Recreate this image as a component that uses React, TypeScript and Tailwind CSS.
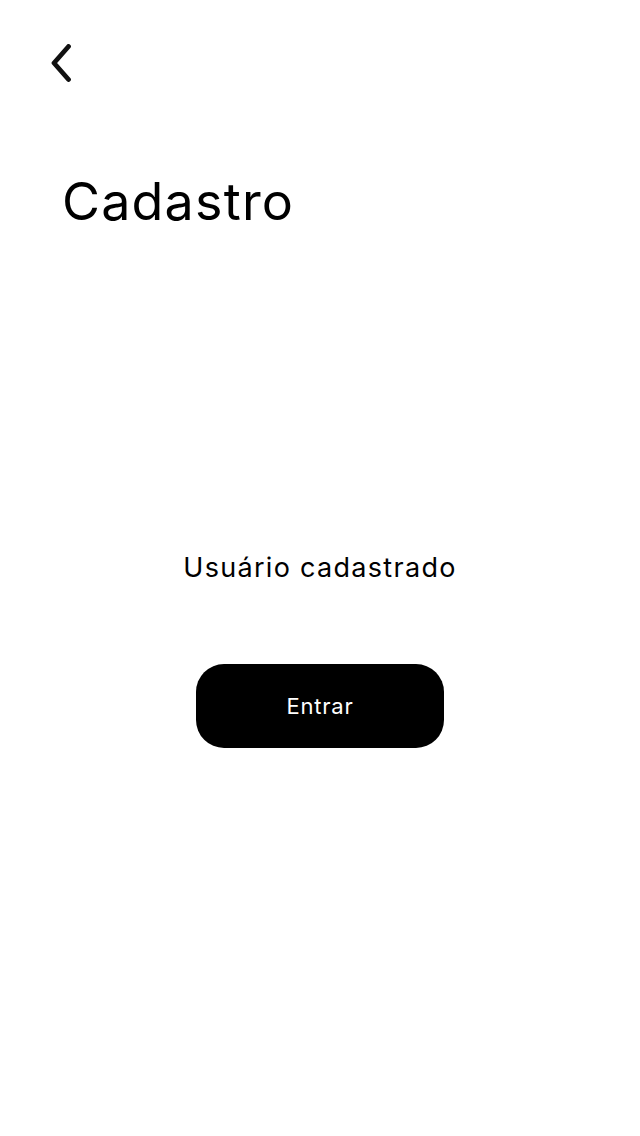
import React from "react";

export default function App() {
  return (
    <div className="w-[640px] h-[1136px] bg-white flex flex-col text-black" style={{ fontFamily: "Inter, 'Noto Sans', sans-serif" }}>
      <div className="pt-[44px] pl-[50px]">
        <svg width="22" height="38" viewBox="0 0 22 38" fill="none">
          <path d="M18.5 2.5 L4 19 L18.5 35.5" stroke="#111" strokeWidth="4.8" strokeLinecap="round" strokeLinejoin="round" />
        </svg>
      </div>
      <h1 className="mt-[90px] ml-[62px] text-[52px] leading-[60px] font-normal tracking-[1.2px]">Cadastro</h1>
      <div className="mt-[320px] flex flex-col items-center">
        <p className="text-[27px] leading-[32px] tracking-[1.3px]">Usuário cadastrado</p>
        <button className="mt-[80px] w-[248px] h-[84px] rounded-[28px] bg-black text-white text-[22px] tracking-[0.8px]">Entrar</button>
      </div>
    </div>
  );
}
